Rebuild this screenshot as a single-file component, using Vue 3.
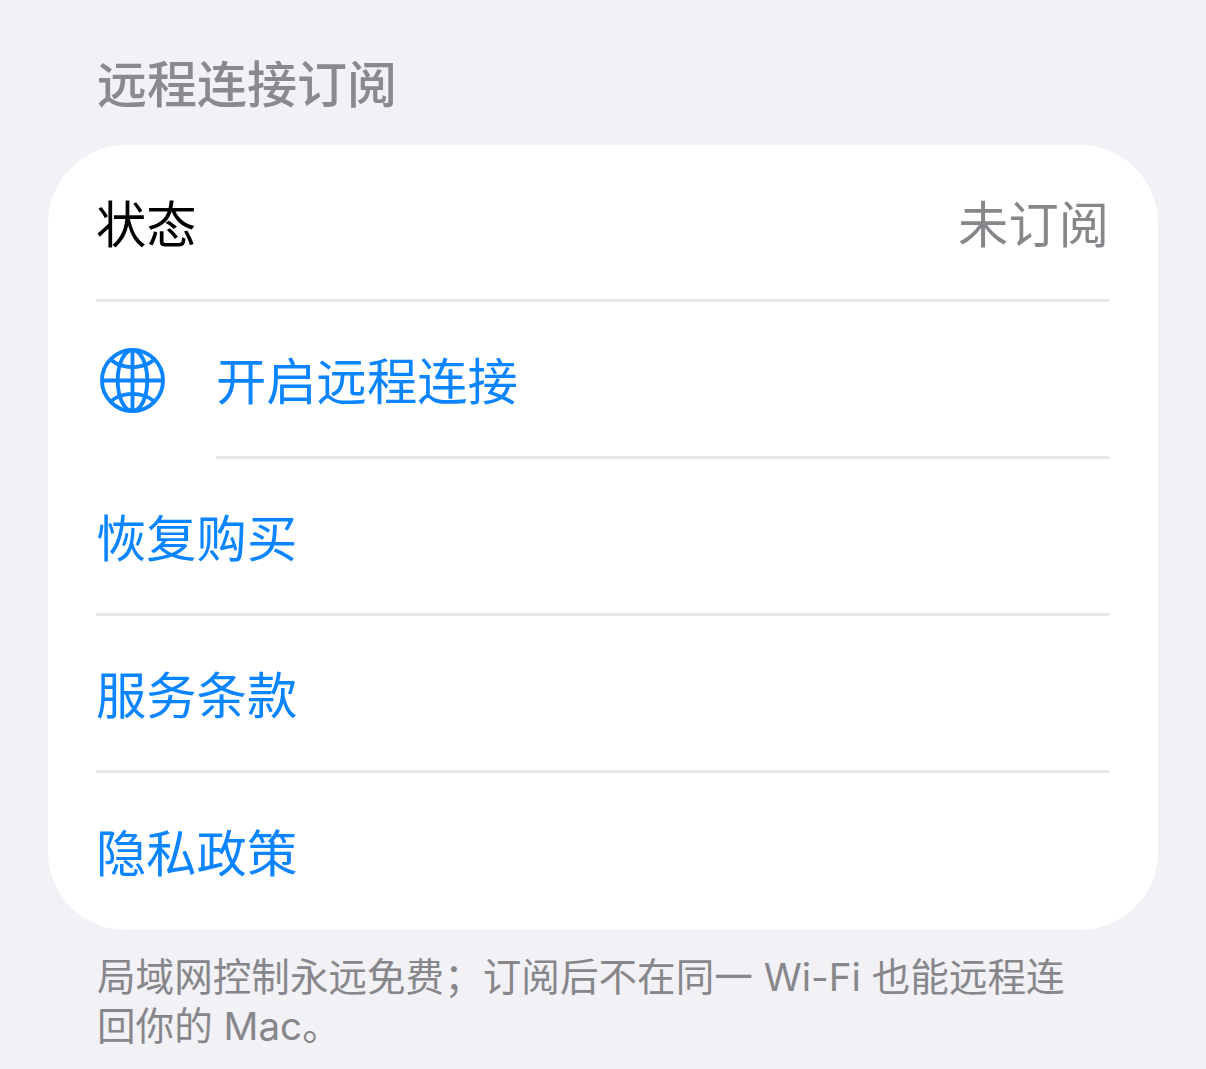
<template>
  <div class="page">
    <h2 class="section-title">远程连接订阅</h2>
    <div class="card">
      <div class="row">
        <div class="row-body">
          <span class="label">状态</span>
          <span class="value">未订阅</span>
        </div>
      </div>
      <div class="row icon-row">
        <svg class="globe" viewBox="0 0 66 66" fill="none" stroke="#0a84ff" stroke-width="3.9">
          <circle cx="33" cy="33" r="31" />
          <ellipse cx="33" cy="33" rx="15" ry="31" />
          <path d="M33 2v62M2 33h62" />
          <path d="M11 12c6 5 13 7.500 22 7.500s16-2.500 22-7.500" />
          <path d="M11 54c6-5 13-7.500 22-7.500s16 2.500 22 7.500" />
        </svg>
        <div class="row-body inset">
          <span class="link">开启远程连接</span>
        </div>
      </div>
      <div class="row">
        <div class="row-body">
          <span class="link">恢复购买</span>
        </div>
      </div>
      <div class="row">
        <div class="row-body">
          <span class="link">服务条款</span>
        </div>
      </div>
      <div class="row">
        <div class="row-body last">
          <span class="link">隐私政策</span>
        </div>
      </div>
    </div>
    <p class="footnote">局域网控制永远免费；订阅后不在同一 Wi-Fi 也能远程连回你的 Mac。</p>
  </div>
</template>

<script setup>
</script>

<style>
html, body {
  margin: 0;
  background: #f1f1f6;
}
</style>

<style scoped>
.page {
  width: 1206px;
  height: 1069px;
  overflow: hidden;
  box-sizing: border-box;
  padding: 0 48px;
  background: #f1f1f6;
  font-family: "Inter", "Noto Sans CJK SC", sans-serif;
}
.section-title {
  margin: 0 0 24px 49px;
  padding-top: 49px;
  line-height: 72px;
  font-size: 50px;
  font-weight: 500;
  color: #8a8a8e;
}
.card {
  height: 785px;
  background: #fff;
  border-radius: 78px;
  overflow: hidden;
}
.row {
  display: flex;
  height: 157px;
}
.icon-row {
  position: relative;
}
.globe {
  position: absolute;
  left: 52px;
  top: 46px;
  width: 65px;
  height: 65px;
}
.row-body {
  flex: 1;
  display: flex;
  align-items: center;
  justify-content: space-between;
  margin: 0 48px;
  padding-top: 5px;
  border-bottom: 3px solid #e8e8ea;
}
.row-body.inset {
  margin-left: 168px;
}
.row-body.last {
  border-bottom: none;
}
.label,
.link,
.value {
  font-size: 50.3px;
  line-height: 72px;
}
.label {
  color: #000;
}
.link {
  color: #0a84ff;
}
.value {
  color: #87878b;
  margin-right: 1px;
}
.footnote {
  margin: 23px 90px 0 49px;
  font-size: 38.6px;
  line-height: 49px;
  color: #87878b;
}
</style>
